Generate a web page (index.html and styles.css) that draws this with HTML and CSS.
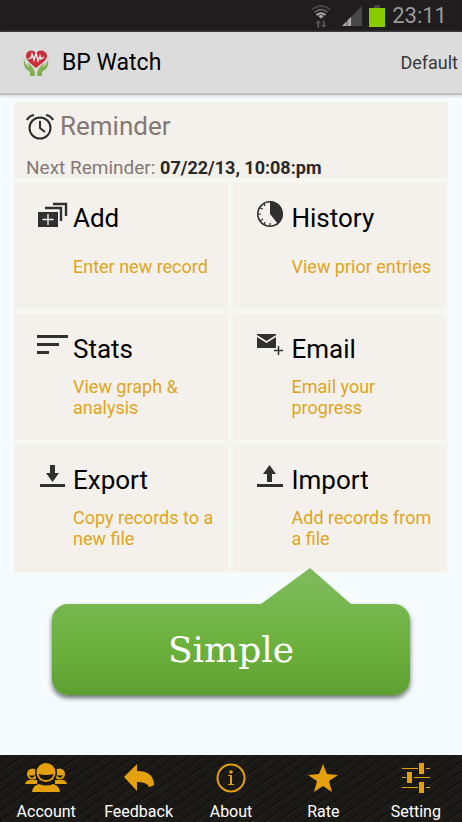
FILE: index.html
```html
<!DOCTYPE html>
<html lang="en">
<head>
<meta charset="utf-8">
<meta name="viewport" content="width=device-width, initial-scale=1">
<title>BP Watch</title>
<link rel="stylesheet" href="styles.css">
</head>
<body>
<div class="status">
  <svg width="20" height="24" viewBox="0 0 22 26" fill="none" stroke-width="2">
    <path d="M1 6Q11 -2 21 6" stroke="#454545"/>
    <path d="M4 9Q11 3 18 9" stroke="#666"/>
    <path d="M6 12Q11 8 16 12" stroke="#aaa"/>
    <path d="M8 13Q11 11 14 13L11 16Z" fill="#aaa"/>
    <path d="M8 26V20M14 18V24" stroke="#555"/>
    <path d="M5 21L8 17L11 21ZM11 23L14 26L17 23Z" fill="#555"/>
  </svg>
  <svg class="signal" width="20" height="20" viewBox="0 0 22 22">
    <path d="M0 22L22 0V22Z" fill="#484848"/>
    <path d="M0 22L5 17V22ZM6 22V16L10 12V22Z" fill="#aaa"/>
  </svg>
  <svg width="16" height="22" viewBox="0 0 16 22">
    <path d="M5 0H11V3H5Z" fill="#444"/>
    <path d="M0 3H16V22H0Z" fill="#8c0"/>
  </svg>
  <span class="clock">23:11</span>
</div>
<header class="header">
  <svg width="26" height="26" viewBox="0 0 26 26">
    <path d="M13 18C8 14 3 10 3 6C3 1 9 -2 13 3C17 -2 24 1 24 6C24 10 18 14 13 18Z" fill="#c9303c"/>
    <path d="M5 9L8 8L9 4L11 10L13 3L15 11L17 6L18 9L21 7" fill="none" stroke="#fff" stroke-width="1.3"/>
    <path d="M1 9Q0 15 3 19L7 22V26H12Q12 20 9 17L5 13Q4 14 7 18Q2 15 1 9Z" fill="#82b04e"/>
    <path d="M25 9Q26 15 23 19L19 22V26H14Q14 20 17 17L21 13Q22 14 19 18Q24 15 25 9Z" fill="#82b04e"/>
  </svg>
  <h1 class="app-name">BP Watch</h1>
  <span class="profile">Default</span>
</header>
<main class="main">
  <div class="panel">
    <section class="reminder">
      <h2 class="reminder-title">
        <svg width="28" height="28" viewBox="0 0 28 28" fill="none" stroke="#2b2b2b" stroke-width="2">
          <circle cx="14" cy="16" r="10.5"/>
          <path d="M14 9V16L19 20"/>
          <path d="M1 8Q3 4 8 3M20 3Q25 4 27 8" stroke-width="2.2"/>
        </svg>
        Reminder
      </h2>
      <p class="reminder-next">Next Reminder: <strong>07/22/13, 10:08:pm</strong></p>
    </section>
    <nav class="tiles">
      <a class="tile" href="#add">
        <svg class="tile-icon" width="32" height="28" viewBox="0 0 32 28">
          <path d="M1 11H21V26H1Z" fill="#303030"/>
          <path d="M11 13V24M5.500 18.500H16.500" stroke="#f4f1ec" stroke-width="1.400"/>
          <path d="M8 7H24V20M16 3H29V15" fill="none" stroke="#303030" stroke-width="2.400"/>
        </svg>
        <span class="tile-title">Add</span>
        <span class="tile-text">Enter new record</span>
      </a>
      <a class="tile" href="#history">
        <svg class="tile-icon" width="32" height="28" viewBox="0 0 32 28">
          <circle cx="14" cy="13" r="12.2" fill="#f4f1ec" stroke="#303030" stroke-width="1.6"/>
          <path d="M14 13V0A13 13 0 0 1 22 23Z" fill="#303030"/>
          <path d="M2 13H5M14 26V22M4 7L7 8M8 2L9 5M4 20L7 18M8 24L9 21" stroke="#303030" stroke-width="1.2"/>
        </svg>
        <span class="tile-title">History</span>
        <span class="tile-text">View prior entries</span>
      </a>
      <a class="tile" href="#stats">
        <svg class="tile-icon" width="32" height="28" viewBox="0 0 32 28">
          <path d="M0 3H31V6H0ZM0 11H22V14H0ZM0 19H12V22H0Z" fill="#303030"/>
        </svg>
        <span class="tile-title">Stats</span>
        <span class="tile-text">View graph &amp; analysis</span>
      </a>
      <a class="tile" href="#email">
        <svg class="tile-icon" width="32" height="28" viewBox="0 0 32 28">
          <path d="M1 2H20V16H1Z" fill="#303030"/>
          <path d="M1 4L10.500 10L20 4" fill="none" stroke="#f4f1ec" stroke-width="1.500"/>
          <path d="M22.500 14V23M18 18.500H27" stroke="#303030" stroke-width="1.500"/>
        </svg>
        <span class="tile-title">Email</span>
        <span class="tile-text">Email your progress</span>
      </a>
      <a class="tile" href="#export">
        <svg class="tile-icon" width="32" height="28" viewBox="0 0 32 28">
          <path d="M13 2H18V10H22L15.500 19L9 10H13ZM3 21H28V24H3Z" fill="#303030"/>
        </svg>
        <span class="tile-title">Export</span>
        <span class="tile-text">Copy records to a new file</span>
      </a>
      <a class="tile" href="#import">
        <svg class="tile-icon" width="32" height="28" viewBox="0 0 32 28">
          <path d="M11 19V11H7L13.500 2L20 11H16V19ZM1 21H27V24H1Z" fill="#303030"/>
        </svg>
        <span class="tile-title">Import</span>
        <span class="tile-text">Add records from a file</span>
      </a>
    </nav>
  </div>
  <div class="callout">
    <svg class="callout-arrow" width="90" height="37" viewBox="0 0 90 37">
      <defs><linearGradient id="tip" x1="0" y1="0" x2="0" y2="1"><stop offset="0" stop-color="#80bb5e"/><stop offset="1" stop-color="#76b74f"/></linearGradient></defs>
      <path d="M0 37V36L49 0L90 36V37Z" fill="url(#tip)"/>
    </svg>
    Simple
  </div>
</main>
<nav class="tabs">
  <a class="tab" href="#account">
    <svg width="42" height="32" viewBox="0 0 42 32" fill="#e5a00d">
      <circle cx="7.500" cy="12" r="5.500"/><circle cx="34.500" cy="12" r="5.500"/>
      <path d="M0 22Q1 18 5 18H12V22ZM42 22Q41 18 37 18H30V22Z"/>
      <ellipse cx="21" cy="11" rx="11" ry="11.500" fill="#1a1815"/>
      <ellipse cx="21" cy="10.500" rx="9.500" ry="9.500"/>
      <path d="M13.500 12Q21 14 28.500 12Q27 18 21 18Q15 18 13.500 12Z" fill="#1a1815"/>
      <path d="M4 13Q7 14 10 13Q9 16 7 16Q5 16 4 13ZM32 13Q35 14 38 13Q37 16 35 16Q33 16 32 13Z" fill="#1a1815"/>
      <path d="M7 30Q8 23 14 22Q21 25 28 22Q34 23 35 30Z"/>
    </svg>
    Account
  </a>
  <a class="tab" href="#feedback">
    <svg width="32" height="32" viewBox="0 0 32 32" fill="#e5a00d">
      <path d="M1 15L14 2V9Q30 9 31 22Q31 24 26 25Q24 20 14 20V29Z"/>
    </svg>
    Feedback
  </a>
  <a class="tab" href="#about">
    <svg width="32" height="32" viewBox="0 0 32 32" fill="#e5a00d">
      <circle cx="16" cy="16" r="13.500" fill="none" stroke="#e5a00d" stroke-width="2"/>
      <circle cx="16" cy="10" r="1.800"/>
      <path d="M13 13H17V22H19V23H13V22H15V14H13Z"/>
    </svg>
    About
  </a>
  <a class="tab" href="#rate">
    <svg width="32" height="32" viewBox="0 0 32 32" fill="#e5a00d">
      <path d="M16 2L20 12L31 13L22 19L25 30L16 24L7 30L10 19L1 13L12 12Z"/>
    </svg>
    Rate
  </a>
  <a class="tab" href="#setting">
    <svg width="32" height="32" viewBox="0 0 32 32" fill="#e5a00d">
      <path d="M2 6H18V7H2ZM26 6H30V7H26ZM2 15H6V16H2ZM14 15H30V16H14ZM2 25H18V26H2ZM26 25H30V26H26ZM19 1H24V12H19ZM7 10H12V21H7ZM19 20H24V31H19Z"/>
    </svg>
    Setting
  </a>
</nav>
</body>
</html>
```
FILE: styles.css
```css
* { box-sizing: border-box; }

body {
  display: flex;
  flex-direction: column;
  min-height: 100vh;
  margin: 0;
  background: #f6fbff;
  font-family: Roboto, "Liberation Sans", sans-serif;
}

h1, h2, p { margin: 0; font-weight: 400; }
a { color: inherit; text-decoration: none; }
svg { flex: none; }

.status {
  display: flex;
  align-items: center;
  justify-content: flex-end;
  gap: 7px;
  height: 32px;
  padding-right: 15px;
  background: #1f1d1d;
}
.signal { margin-left: 4px; }
.clock { color: #9a9a9a; font-size: 22px; line-height: 32px; }

.header {
  display: flex;
  align-items: center;
  gap: 13px;
  height: 63px;
  padding: 0 4px 0 23px;
  background: #dcdcdc;
  border-bottom: 2px solid #c0c0c0;
  box-shadow: 0 1px 3px #ccd0d0;
}
.app-name { font-size: 23px; }
.profile { margin-left: auto; color: #383838; font-size: 18px; }

.main { padding: 7px 14px 24px; }

.panel { background: #f7f7f2; }

.reminder {
  height: 76px;
  padding: 7px 12px 0;
  background: #f4f1ec;
  color: #857874;
}
.reminder-title {
  display: flex;
  align-items: center;
  gap: 6px;
  font-size: 26px;
  line-height: 34px;
}
.reminder-next {
  margin-top: 14px;
  font-size: 19px;
  line-height: 21px;
}
.reminder-next strong { color: #2a2727; font-size: 18px; font-weight: 700; }

.tiles {
  display: grid;
  grid-template-columns: 1fr 1fr;
  gap: 5px;
  padding: 5px 2px 2px 0;
}
.tile {
  display: grid;
  grid-template-columns: 32px 1fr;
  grid-template-rows: 34px 42px;
  column-gap: 4px;
  row-gap: 10px;
  height: 126px;
  padding: 18px 8px 0 23px;
  background: #f4f1ec;
}
.tile-title { color: #000; font-size: 26px; line-height: 34px; }
.tile-text {
  grid-column: 2;
  align-self: center;
  color: #dfa520;
  font-size: 18px;
  line-height: 21px;
}

.callout {
  position: relative;
  height: 91px;
  margin: 31px 38px 0;
  border-radius: 16px;
  background: linear-gradient(#76b74f, #6bb03c 50%, #5e9f32);
  box-shadow: 0 3px 5px #66706a;
  color: #fff;
  font-family: "DejaVu Serif", serif;
  font-size: 36px;
  line-height: 91px;
  text-align: center;
}
.callout-arrow {
  position: absolute;
  right: 59px;
  bottom: 100%;
  margin-bottom: -1px;
}

.tabs {
  display: grid;
  grid-template-columns: repeat(5, 1fr);
  height: 67px;
  margin-top: auto;
  background: repeating-linear-gradient(145deg, #1c1a17 0 4px, #141311 5px 6px, #211f1b 7px 8px);
}
.tab {
  display: flex;
  flex-direction: column;
  align-items: center;
  gap: 8px;
  padding-top: 7px;
  color: #fff;
  font-size: 16px;
  line-height: 20px;
}
```
